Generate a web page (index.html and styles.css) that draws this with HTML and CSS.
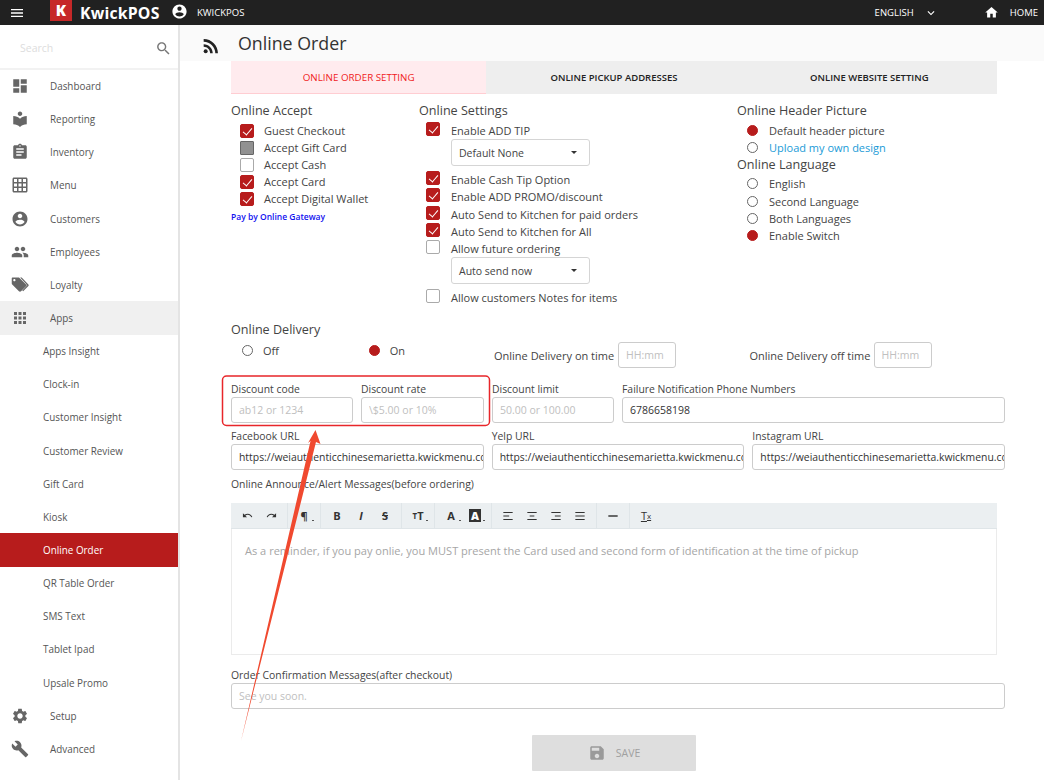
FILE: index.html
```html
<!DOCTYPE html>
<html lang="en">
  <head>
    <meta charset="UTF-8" />
    <meta name="viewport" content="width=device-width, initial-scale=1.0" />
    <title>KwickPOS - Online Order</title>
    <link rel="stylesheet" href="styles.css">
  </head>
  <body>
    <header class="topbar">
      <svg class="top-menu" viewBox="0 0 24 24"><path d="M3 18h18v-2H3v2zm0-5h18v-2H3v2zm0-7v2h18V6H3z"/></svg>
      <span class="logo-box">K</span>
      <span class="logo-text">KwickPOS</span>
      <svg class="top-user" viewBox="0 0 24 24"><path d="M12 2C6.48 2 2 6.48 2 12s4.48 10 10 10 10-4.48 10-10S17.52 2 12 2zm0 3c1.66 0 3 1.34 3 3s-1.34 3-3 3-3-1.34-3-3 1.34-3 3-3zm0 14.2c-2.5 0-4.71-1.28-6-3.22.03-1.99 4-3.08 6-3.08 1.99 0 5.97 1.09 6 3.08-1.29 1.94-3.5 3.22-6 3.22z"/></svg>
      <span class="top-name">KWICKPOS</span>
      <span class="top-lang">ENGLISH</span>
      <svg class="top-chevron" viewBox="0 0 24 24"><path d="M16.59 8.59L12 13.17 7.41 8.59 6 10l6 6 6-6z"/></svg>
      <svg class="top-home" viewBox="0 0 24 24"><path d="M10 20v-6h4v6h5v-8h3L12 3 2 12h3v8z"/></svg>
      <span class="top-homelabel">HOME</span>
    </header>

    <div class="layout">
      <nav class="sidebar">
        <div class="search">
          <span>Search</span>
          <svg viewBox="0 0 24 24"><path d="M15.5 14h-.79l-.28-.27C15.41 12.59 16 11.11 16 9.5 16 5.91 13.09 3 9.5 3S3 5.91 3 9.5 5.91 16 9.5 16c1.61 0 3.09-.59 4.23-1.57l.27.28v.79l5 4.99L20.49 19l-4.99-5zm-6 0C7.01 14 5 11.99 5 9.5S7.01 5 9.5 5 14 7.01 14 9.5 11.99 14 9.5 14z"/></svg>
        </div>
        <a class="nav-item"><svg viewBox="0 0 24 24"><path d="M3 13h8V3H3v10zm0 8h8v-6H3v6zm10 0h8V11h-8v10zm0-18v6h8V3h-8z"/></svg>Dashboard</a>
        <a class="nav-item"><svg viewBox="0 0 24 24"><path d="M12 11.55C9.64 9.35 6.48 8 3 8v11c3.48 0 6.64 1.35 9 3.55 2.36-2.19 5.52-3.55 9-3.55V8c-3.48 0-6.64 1.35-9 3.55zM12 8c1.66 0 3-1.34 3-3s-1.34-3-3-3-3 1.34-3 3 1.34 3 3 3z"/></svg>Reporting</a>
        <a class="nav-item"><svg viewBox="0 0 24 24"><path d="M19 3h-4.18C14.4 1.84 13.3 1 12 1c-1.3 0-2.4.84-2.82 2H5c-1.1 0-2 .9-2 2v14c0 1.1.9 2 2 2h14c1.1 0 2-.9 2-2V5c0-1.1-.9-2-2-2zm-7 0c.55 0 1 .45 1 1s-.45 1-1 1-1-.45-1-1 .45-1 1-1zm2 14H7v-2h7v2zm3-4H7v-2h10v2zm0-4H7V7h10v2z"/></svg>Inventory</a>
        <a class="nav-item"><svg viewBox="0 0 24 24"><path d="M20 2H4c-1.1 0-2 .9-2 2v16c0 1.1.9 2 2 2h16c1.1 0 2-.9 2-2V4c0-1.1-.9-2-2-2zM8 20H4v-4h4v4zm0-6H4v-4h4v4zm0-6H4V4h4v4zm6 12h-4v-4h4v4zm0-6h-4v-4h4v4zm0-6h-4V4h4v4zm6 12h-4v-4h4v4zm0-6h-4v-4h4v4zm0-6h-4V4h4v4z"/></svg>Menu</a>
        <a class="nav-item"><svg viewBox="0 0 24 24"><path d="M12 2C6.48 2 2 6.48 2 12s4.48 10 10 10 10-4.48 10-10S17.52 2 12 2zm0 3c1.66 0 3 1.34 3 3s-1.34 3-3 3-3-1.34-3-3 1.34-3 3-3zm0 14.2c-2.5 0-4.71-1.28-6-3.22.03-1.99 4-3.08 6-3.08 1.99 0 5.97 1.09 6 3.08-1.29 1.94-3.5 3.22-6 3.22z"/></svg>Customers</a>
        <a class="nav-item"><svg viewBox="0 0 24 24"><path d="M16 11c1.66 0 2.99-1.34 2.99-3S17.66 5 16 5c-1.66 0-3 1.34-3 3s1.34 3 3 3zm-8 0c1.66 0 2.99-1.34 2.99-3S9.66 5 8 5C6.34 5 5 6.34 5 8s1.34 3 3 3zm0 2c-2.33 0-7 1.17-7 3.5V19h14v-2.5c0-2.33-4.67-3.5-7-3.5zm8 0c-.29 0-.62.02-.97.05 1.16.84 1.97 1.97 1.97 3.45V19h6v-2.5c0-2.33-4.67-3.5-7-3.5z"/></svg>Employees</a>
        <a class="nav-item"><svg viewBox="0 0 24 24"><path d="M20.4 11.6l-9-9C11 2.2 10.5 2 10 2H2.5C1.4 2 1 2.4 1 3.5V10c0 .55.22 1.05.59 1.42l9 9c.36.36.86.58 1.41.58.55 0 1.05-.22 1.41-.59l6.99-7c.37-.36.6-.86.6-1.41 0-.55-.23-1.06-.6-1.4zM4.5 7C3.67 7 3 6.33 3 5.5S3.67 4 4.5 4 6 4.67 6 5.5 5.33 7 4.5 7z"/><path d="M14.2 2l9 9.3c.6.6.6 1.5 0 2.1l-7 7-1.2-1.2 6.7-6.8L12.2 2z"/></svg>Loyalty</a>
        <a class="nav-item open"><svg viewBox="0 0 24 24"><path d="M4 8h4V4H4v4zm6 12h4v-4h-4v4zm-6 0h4v-4H4v4zm0-6h4v-4H4v4zm6 0h4v-4h-4v4zm6-10v4h4V4h-4zm-6 4h4V4h-4v4zm6 6h4v-4h-4v4zm0 6h4v-4h-4v4z"/></svg>Apps</a>
        <a class="nav-item sub">Apps Insight</a>
        <a class="nav-item sub">Clock-in</a>
        <a class="nav-item sub">Customer Insight</a>
        <a class="nav-item sub">Customer Review</a>
        <a class="nav-item sub">Gift Card</a>
        <a class="nav-item sub">Kiosk</a>
        <a class="nav-item sub active">Online Order</a>
        <a class="nav-item sub">QR Table Order</a>
        <a class="nav-item sub">SMS Text</a>
        <a class="nav-item sub">Tablet Ipad</a>
        <a class="nav-item sub">Upsale Promo</a>
        <a class="nav-item"><svg viewBox="0 0 24 24"><path d="M19.14 12.94c.04-.3.06-.61.06-.94 0-.32-.02-.64-.07-.94l2.03-1.58c.18-.14.23-.41.12-.61l-1.92-3.32c-.12-.22-.37-.29-.59-.22l-2.39.96c-.5-.38-1.03-.7-1.62-.94l-.36-2.54c-.04-.24-.24-.41-.48-.41h-3.84c-.24 0-.43.17-.47.41l-.36 2.54c-.59.24-1.13.57-1.62.94l-2.39-.96c-.22-.08-.47 0-.59.22L2.74 8.87c-.12.21-.08.47.12.61l2.03 1.58c-.05.3-.09.63-.09.94s.02.64.07.94l-2.03 1.58c-.18.14-.23.41-.12.61l1.92 3.32c.12.22.37.29.59.22l2.39-.96c.5.38 1.03.7 1.62.94l.36 2.54c.05.24.24.41.48.41h3.84c.24 0 .44-.17.47-.41l.36-2.54c.59-.24 1.13-.56 1.62-.94l2.39.96c.22.08.47 0 .59-.22l1.92-3.32c.12-.22.07-.47-.12-.61l-2.01-1.58zM12 15.6c-1.98 0-3.6-1.62-3.6-3.6s1.62-3.6 3.6-3.6 3.6 1.62 3.6 3.6-1.62 3.6-3.6 3.6z"/></svg>Setup</a>
        <a class="nav-item"><svg viewBox="0 0 24 24"><path d="M22.7 19l-9.1-9.1c.9-2.3.4-5-1.5-6.9-2-2-5-2.4-7.4-1.3L9 6 6 9 1.6 4.7C.4 7.1.9 10.1 2.9 12.1c1.9 1.9 4.6 2.4 6.9 1.5l9.1 9.1c.4.4 1 .4 1.4 0l2.3-2.3c.5-.4.5-1.1.1-1.4z"/></svg>Advanced</a>
      </nav>

      <main class="main">
        <div class="title-bar">
          <svg viewBox="0 0 24 24"><circle cx="6.18" cy="17.82" r="2.18"/><path d="M4 4.44v2.83c7.03 0 12.73 5.7 12.73 12.73h2.83c0-8.59-6.97-15.56-15.56-15.56zm0 5.66v2.83c3.9 0 7.07 3.17 7.07 7.07h2.83c0-5.47-4.43-9.9-9.9-9.9z"/></svg>
          <h1>Online Order</h1>
        </div>

        <div class="content">
          <div class="tabs">
            <div class="tab selected">ONLINE ORDER SETTING</div>
            <div class="tab">ONLINE PICKUP ADDRESSES</div>
            <div class="tab">ONLINE WEBSITE SETTING</div>
          </div>

          <div class="settings">
            <section class="col-accept">
              <h3>Online Accept</h3>
              <div class="check-row"><span class="box on"></span>Guest Checkout</div>
              <div class="check-row"><span class="box gray"></span>Accept Gift Card</div>
              <div class="check-row"><span class="box"></span>Accept Cash</div>
              <div class="check-row"><span class="box on"></span>Accept Card</div>
              <div class="check-row"><span class="box on"></span>Accept Digital Wallet</div>
              <a class="gateway">Pay by Online Gateway</a>
            </section>

            <section class="col-settings">
              <h3>Online Settings</h3>
              <div class="check-row"><span class="box on"></span>Enable ADD TIP</div>
              <div class="select">Default None<i class="caret"></i></div>
              <div class="check-row first-after"><span class="box on"></span>Enable Cash Tip Option</div>
              <div class="check-row"><span class="box on"></span>Enable ADD PROMO/discount</div>
              <div class="check-row"><span class="box on"></span>Auto Send to Kitchen for paid orders</div>
              <div class="check-row"><span class="box on"></span>Auto Send to Kitchen for All</div>
              <div class="check-row"><span class="box"></span>Allow future ordering</div>
              <div class="select">Auto send now<i class="caret"></i></div>
              <div class="check-row last-after"><span class="box"></span>Allow customers Notes for items</div>
            </section>

            <section class="col-header">
              <h3>Online Header Picture</h3>
              <div class="radio-row"><span class="radio on"></span>Default header picture</div>
              <div class="radio-row link"><span class="radio"></span>Upload my own design</div>
              <h3>Online Language</h3>
              <div class="lang-rows">
                <div class="radio-row"><span class="radio"></span>English</div>
                <div class="radio-row"><span class="radio"></span>Second Language</div>
                <div class="radio-row"><span class="radio"></span>Both Languages</div>
                <div class="radio-row"><span class="radio on"></span>Enable Switch</div>
              </div>
            </section>
          </div>

          <h3 class="delivery-title">Online Delivery</h3>
          <div class="delivery">
            <div class="radio-row cell-off"><span class="radio"></span>Off</div>
            <div class="radio-row cell-on"><span class="radio on"></span>On</div>
            <div class="time-cell">
              <label>Online Delivery on time</label>
              <input type="text" placeholder="HH:mm" />
            </div>
            <div class="time-cell">
              <label>Online Delivery off time</label>
              <input type="text" placeholder="HH:mm" />
            </div>
          </div>

          <div class="fields discount">
            <div class="field"><label>Discount code</label><input type="text" placeholder="ab12 or 1234" /></div>
            <div class="field"><label>Discount rate</label><input type="text" placeholder="\$5.00 or 10%" /></div>
            <div class="field"><label>Discount limit</label><input type="text" placeholder="50.00 or 100.00" /></div>
            <div class="field"><label>Failure Notification Phone Numbers</label><input type="text" value="6786658198" /></div>
          </div>

          <div class="fields urls">
            <div class="field"><label>Facebook URL</label><input type="text" value="https://weiauthenticchinesemarietta.kwickmenu.com" /></div>
            <div class="field"><label>Yelp URL</label><input type="text" value="https://weiauthenticchinesemarietta.kwickmenu.com" /></div>
            <div class="field"><label>Instagram URL</label><input type="text" value="https://weiauthenticchinesemarietta.kwickmenu.com" /></div>
          </div>

          <label class="block-label announce-label">Online Announce/Alert Messages(before ordering)</label>
          <div class="editor">
            <div class="toolbar">
              <div class="tool-group">
                <span class="tool hist"><svg viewBox="0 0 24 24"><path d="M12.5 8c-2.65 0-5.05.99-6.9 2.6L2 7v9h9l-3.62-3.62c1.39-1.16 3.16-1.88 5.12-1.88 3.54 0 6.55 2.31 7.6 5.5l2.37-.78C21.08 11.03 17.15 8 12.5 8z"/></svg></span>
                <span class="tool hist"><svg viewBox="0 0 24 24"><path d="M18.4 10.6C16.55 8.99 14.15 8 11.5 8c-4.65 0-8.58 3.03-9.96 7.22L3.9 16c1.05-3.19 4.05-5.5 7.6-5.5 1.95 0 3.73.72 5.12 1.88L13 16h9V7l-3.6 3.6z"/></svg></span>
              </div>
              <div class="tool-group"><span class="tool more">¶</span></div>
              <div class="tool-group">
                <span class="tool">B</span>
                <span class="tool ital">I</span>
                <span class="tool"><s>S</s></span>
              </div>
              <div class="tool-group"><span class="tool more"><small>T</small>T</span></div>
              <div class="tool-group">
                <span class="tool more">A</span>
                <span class="tool more"><b class="filled">A</b></span>
              </div>
              <div class="tool-group">
                <span class="tool"><svg viewBox="0 0 24 24"><path d="M4 5h16v2H4zm0 6h10v2H4zm0 6h16v2H4z"/></svg></span>
                <span class="tool"><svg viewBox="0 0 24 24"><path d="M4 5h16v2H4zm4 6h8v2H8zm-4 6h16v2H4z"/></svg></span>
                <span class="tool"><svg viewBox="0 0 24 24"><path d="M4 5h16v2H4zm6 6h10v2H10zm-6 6h16v2H4z"/></svg></span>
                <span class="tool"><svg viewBox="0 0 24 24"><path d="M4 5h16v2H4zm0 6h16v2H4zm0 6h16v2H4z"/></svg></span>
              </div>
              <div class="tool-group">
                <span class="tool"><svg viewBox="0 0 24 24"><path d="M4 10.75h16v2.5H4z"/></svg></span>
              </div>
              <div class="tool-group"><span class="tool clear">T<small>x</small></span></div>
            </div>
            <div class="editor-body">As a reminder, if you pay onlie, you MUST present the Card used and second form of identification at the time of pickup</div>
          </div>

          <label class="block-label confirm-label">Order Confirmation Messages(after checkout)</label>
          <input class="wide-input" type="text" placeholder="See you soon." />

          <div class="save-row">
            <button class="save-btn">
              <svg viewBox="0 0 24 24"><path d="M17 3H5c-1.11 0-2 .9-2 2v14c0 1.1.89 2 2 2h14c1.1 0 2-.9 2-2V7l-4-4zm-5 16c-1.66 0-3-1.34-3-3s1.34-3 3-3 3 1.34 3 3-1.34 3-3 3zm3-10H5V5h10v4z"/></svg>
              SAVE
            </button>
          </div>
        </div>
      </main>
    </div>

    <!-- red markup drawn over the screenshot -->
    <svg class="markup" viewBox="0 0 1044 780">
      <rect x="222.5" y="376" width="267" height="49.5" rx="4" fill="none" stroke="#e8262a" stroke-width="1.5"/>
      <polygon points="315.5,430 320.5,444 316,442 241,741 310.5,441 308,443" fill="#f0492f"/>
    </svg>
  </body>
</html>
```
FILE: styles.css
```css
* {
  box-sizing: border-box;
}
html,
body {
  height: 100%;
}
body {
  margin: 0;
  font-family: "Open Sans", Arial, sans-serif;
  color: #444;
  background-color: #fff;
  overflow: hidden;
}
h1,
h3 {
  margin: 0;
  font-weight: 400;
}

/* top bar */
.topbar {
  display: flex;
  align-items: center;
  height: 25px;
  background-color: #212121;
  color: #fff;
}
.topbar svg {
  fill: #fff;
}
.top-menu {
  width: 16px;
  height: 16px;
  margin-left: 9px;
}
.logo-box {
  width: 22px;
  height: 21px;
  margin: -4px 0 0 25px;
  background-color: #c62828;
  font-size: 15px;
  font-weight: 800;
  line-height: 21px;
  text-align: center;
}
.logo-text {
  margin-left: 8px;
  width: 91px;
  font-size: 15.8px;
  font-weight: 700;
  letter-spacing: 0.2px;
}
.top-user {
  width: 17px;
  height: 17px;
  margin: -2px 0 0 0;
}
.top-name {
  margin-left: 9px;
  font-size: 9.5px;
}
.top-lang {
  margin-left: auto;
  font-size: 9.5px;
}
.top-chevron {
  width: 14px;
  height: 14px;
  margin-left: 10px;
}
.top-home {
  width: 15px;
  height: 15px;
  margin-left: 46px;
}
.top-homelabel {
  margin: 0 6px 0 11px;
  font-size: 9.5px;
}

.layout {
  display: flex;
  height: 755px;
}

/* sidebar */
.sidebar {
  flex: none;
  width: 180px;
  border-right: 2px solid #e4e4e4;
  background-color: #fff;
}
.search {
  display: flex;
  align-items: center;
  justify-content: space-between;
  height: 44.5px;
  padding: 4px 6px 0 20px;
  border-bottom: 2px solid #f2f2f2;
  font-size: 10.5px;
  color: #ddd;
}
.search svg {
  width: 17px;
  height: 17px;
  fill: #777;
}
.nav-item {
  display: flex;
  align-items: center;
  height: 33.15px;
  padding-left: 11px;
  font-size: 9.9px;
  color: #555;
}
.nav-item svg {
  width: 18px;
  height: 18px;
  margin-right: 21px;
  fill: #666;
}
.nav-item.open {
  background-color: #f0f0f0;
}
.nav-item.sub {
  padding-left: 43px;
}
.nav-item.active {
  background-color: #b71c1c;
  color: #fff;
}

/* main */
.main {
  flex: 1;
  min-width: 0;
}
.title-bar {
  display: flex;
  align-items: center;
  height: 36px;
  padding-left: 20px;
  background-color: #fafafa;
}
.title-bar svg {
  width: 22px;
  height: 22px;
  margin: 6px 16px 0 0;
  fill: #222;
}
.title-bar h1 {
  margin-top: -1px;
  font-size: 17.8px;
  color: #333;
}
.content {
  padding-left: 51px;
  width: 825px;
}

.tabs {
  display: flex;
  width: 766px;
  height: 33px;
}
.tab {
  flex: 1;
  background-color: #eee;
  font-size: 9.5px;
  font-weight: 600;
  line-height: 34px;
  text-align: center;
  color: #222;
}
.tab.selected {
  background-color: #ffebee;
  border-bottom: 1px solid #ffcdd2;
  font-size: 9.8px;
  font-weight: 400;
  color: #f01c1c;
}

/* settings columns */
.settings {
  display: flex;
  height: 226px;
  padding-top: 8px;
}
.settings h3,
.delivery-title {
  height: 18px;
  font-size: 12.6px;
  line-height: 18px;
  color: #444;
}
.col-accept {
  width: 188px;
}
.col-settings {
  width: 318px;
}
.col-accept h3 {
  margin-bottom: 2.4px;
}
.col-settings h3 {
  margin-bottom: 2px;
}
.check-row {
  display: flex;
  align-items: center;
  height: 17.2px;
  font-size: 11px;
  color: #444;
}
.col-accept .check-row {
  height: 17px;
}
.box {
  flex: none;
  width: 14px;
  height: 14px;
  margin: 0 10px 0 9px;
  position: relative;
  border: 1px solid #aaa;
  border-radius: 2px;
  background-color: #fff;
}
.col-settings .box {
  margin: -3px 11px 0 7px;
}
.box.gray {
  border-color: #666;
  border-radius: 1px;
  background-color: #919191;
}
.box.on {
  border-color: #b71c1c;
  background-color: #b71c1c;
}
/* tick */
.box.on::after {
  content: "";
  position: absolute;
  left: 4px;
  top: 1px;
  width: 4px;
  height: 8px;
  border: solid #fff;
  border-width: 0 1px 1px 0;
  transform: rotate(40deg);
}
.gateway {
  display: block;
  margin-top: 4px;
  font-size: 8.5px;
  font-weight: 600;
  color: #1010f0;
}
.select {
  display: flex;
  align-items: center;
  justify-content: space-between;
  width: 139px;
  height: 27px;
  margin-left: 32px;
  padding: 0 12px 0 7px;
  border: 1px solid #d5d5d5;
  border-radius: 3px;
  font-size: 10.5px;
}
.caret {
  width: 0;
  height: 0;
  border: 3.5px solid transparent;
  border-top-color: #333;
  border-bottom: 0;
}
.first-after {
  margin-top: 5px;
}
.last-after {
  margin-top: 5px;
}
.col-header h3 + .radio-row {
  margin-top: 2px;
}
.radio-row {
  display: flex;
  align-items: center;
  height: 17.2px;
  font-size: 11px;
  color: #444;
}
.radio {
  flex: none;
  width: 11px;
  height: 11px;
  margin: 0 11px 0 10px;
  border: 1px solid #666;
  border-radius: 50%;
}
.radio.on {
  border-color: #b71c1c;
  background-color: #b71c1c;
}
.radio-row.link {
  color: #1a9bd7;
}
.lang-rows {
  margin-top: 1px;
}

/* delivery */
.delivery-title {
  margin-top: 1px;
}
.delivery {
  display: flex;
  height: 26px;
  margin-top: 3px;
}
.cell-off .radio,
.cell-on .radio {
  margin: 0 10px 0 0;
}
.cell-off {
  width: 127px;
  margin-left: 11px;
}
.cell-on {
  width: 125.5px;
}
.time-cell {
  display: flex;
  align-items: center;
  width: 256px;
  font-size: 11px;
}
.time-cell label {
  width: 124px;
  white-space: nowrap;
}
.time-cell input {
  width: 58px;
}

/* inputs */
input {
  height: 26px;
  padding: 0 7px;
  border: 1px solid #ccc;
  border-radius: 3px;
  font-family: inherit;
  font-size: 10.5px;
  color: #333;
  outline: none;
}
input::placeholder {
  color: #c0c0c0;
}
.fields {
  display: grid;
  gap: 8px;
  width: 774px;
}
.discount {
  grid-template-columns: 122px 123px 122px 1fr;
  margin-top: 15px;
}
.urls {
  grid-template-columns: 1fr 1fr 1fr;
  margin-top: 7px;
}
.urls input {
  padding-right: 0;
  font-size: 10.4px;
}
.field label,
.block-label {
  display: block;
  height: 14px;
  font-size: 10.4px;
  line-height: 13px;
  color: #444;
}
.field input {
  width: 100%;
}
.announce-label {
  margin-top: 8px;
}
.confirm-label {
  margin-top: 14px;
}

/* editor */
.editor {
  width: 766px;
  height: 152px;
  margin-top: 11px;
  border: 1px solid #ebebeb;
}
.toolbar {
  display: flex;
  height: 26px;
  margin: -1px -1px 0;
  background-color: #ebeff1;
  border-bottom: 1px solid #dfe5e8;
}
.tool-group {
  display: flex;
  padding: 0 4px;
  border-right: 1px solid #dfe5e8;
}
.tool-group:last-child {
  border-right: 0;
}
.tool {
  display: flex;
  align-items: center;
  justify-content: center;
  position: relative;
  width: 24px;
  font-size: 11px;
  font-weight: 700;
  color: #333;
}
.tool svg {
  width: 14px;
  height: 14px;
  fill: #333;
}
.tool.hist svg {
  width: 11px;
  height: 11px;
}
.tool small {
  font-size: 8px;
}
.tool.ital {
  font-style: italic;
}
.tool.clear {
  font-weight: 400;
  text-decoration: underline;
}
.tool.more::after {
  content: "";
  position: absolute;
  right: 2px;
  bottom: 7px;
  width: 2px;
  height: 1px;
  background-color: #555;
}
.filled {
  padding: 0 2px;
  line-height: 13px;
  background-color: #333;
  color: #fff;
}
.editor-body {
  padding: 14px 13px;
  font-size: 11.05px;
  color: #a6a6a6;
}

.wide-input {
  display: block;
  width: 774px;
}
.save-row {
  width: 766px;
  margin-top: 26px;
  text-align: center;
}
.save-btn {
  display: inline-flex;
  align-items: center;
  justify-content: center;
  gap: 10px;
  width: 164px;
  height: 36px;
  border: none;
  border-radius: 1px;
  background-color: #dedede;
  font-family: inherit;
  font-size: 10.5px;
  color: #a0a0a0;
}
.save-btn svg {
  width: 18px;
  height: 18px;
  fill: #9a9a9a;
}

.markup {
  position: absolute;
  left: 0;
  top: 0;
  width: 1044px;
  height: 780px;
  pointer-events: none;
}
```
